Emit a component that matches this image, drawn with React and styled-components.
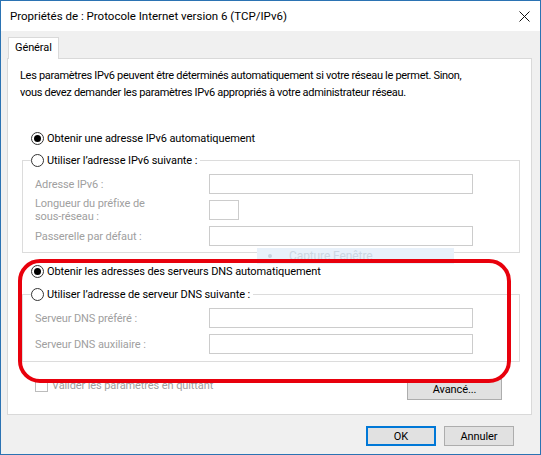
import styled, { createGlobalStyle } from "styled-components";

const GlobalStyle = createGlobalStyle`
  html, body {
    margin: 0;
    padding: 0;
    background: #ffffff;
  }
  body {
    font-family: "Segoe UI", Roboto, "Noto Sans", sans-serif;
    font-size: 11px;
    letter-spacing: -0.1px;
    color: #000;
  }
  * {
    box-sizing: border-box;
  }
`;

const Window = styled.div`
  position: relative;
  width: 541px;
  height: 455px;
  border: 1px solid #2b73b3;
  background: #f0f0f0;
  display: flex;
  flex-direction: column;
  overflow: hidden;
`;

const TitleBar = styled.div`
  height: 30px;
  flex: none;
  background: #ffffff;
  display: flex;
  align-items: center;
  justify-content: space-between;
  padding: 0 10px 0 9px;
`;

const Title = styled.span`
  font-size: 11.5px;
  letter-spacing: 0;
  line-height: 16px;
`;

const Body = styled.div`
  flex: 1;
  display: flex;
  flex-direction: column;
  padding: 6px 8px 0 6px;
`;

const TabStrip = styled.div`
  display: flex;
  padding-left: 1px;
  margin-bottom: -1px;
  position: relative;
  z-index: 1;
`;

const Tab = styled.div`
  height: 22px;
  padding: 0 6px;
  border: 1px solid #d9d9d9;
  border-bottom: none;
  background: #ffffff;
  line-height: 20px;
`;

const Panel = styled.div`
  height: 357px;
  background: #ffffff;
  border: 1px solid #d9d9d9;
  padding: 8px 0 0 12px;
  display: flex;
  flex-direction: column;
`;

const Description = styled.p`
  margin: 0;
  line-height: 17px;
  letter-spacing: -0.3px;
  white-space: nowrap;
`;

const Radio = styled.label`
  display: flex;
  align-items: center;
  gap: 3px;
  height: 18px;
  white-space: nowrap;
  margin-left: ${(p) => p.$indent ?? 11}px;
  margin-top: ${(p) => p.$top ?? 0}px;
`;

const Circle = styled.span`
  flex: none;
  width: 13px;
  height: 13px;
  border-radius: 50%;
  border: 1px solid #333333;
  background: #ffffff;
  display: flex;
  align-items: center;
  justify-content: center;
  &::after {
    content: "";
    width: 7px;
    height: 7px;
    border-radius: 50%;
    background: ${(p) => (p.$checked ? "#000" : "transparent")};
  }
`;

const Group = styled.fieldset`
  margin: ${(p) => p.$top}px 11px 0 2px;
  border: 1px solid #dcdcdc;
  padding: 5px 0 ${(p) => p.$bottom}px 8px;
  min-width: 0;
`;

const Legend = styled.legend`
  padding: 0 3px 0 0;
  margin: 0;
  & > label {
    margin: 0;
  }
`;

const FieldGrid = styled.div`
  margin-left: 4px;
  display: grid;
  grid-template-columns: 174px auto;
  grid-auto-rows: 20px;
  row-gap: 6px;
`;

const FieldLabel = styled.span`
  align-self: center;
  color: #a0a0a0;
  line-height: 13px;
  white-space: nowrap;
`;

const Input = styled.div`
  width: ${(p) => p.$width}px;
  height: 20px;
  border: 1px solid #cccccc;
  background: #ffffff;
`;

const BottomRow = styled.div`
  margin: 17px 29px 0 15px;
  display: flex;
  justify-content: space-between;
  align-items: flex-start;
`;

const CheckLabel = styled.label`
  display: flex;
  align-items: center;
  gap: 4px;
  color: #a0a0a0;
  height: 13px;
`;

const CheckBox = styled.span`
  width: 13px;
  height: 13px;
  border: 1px solid #bcbcbc;
  background: #ffffff;
`;

const Button = styled.button`
  width: ${(p) => p.$width}px;
  height: ${(p) => p.$height}px;
  font: inherit;
  font-size: 11px;
  letter-spacing: inherit;
  color: #000;
  background: #e1e1e1;
  border: 1px solid ${(p) => (p.$default ? "#0078d7" : "#adadad")};
  box-shadow: ${(p) => (p.$default ? "inset 0 0 0 1px #0078d7" : "none")};
  padding: 0;
  border-radius: 0;
`;

const Footer = styled.div`
  display: flex;
  justify-content: flex-end;
  gap: 8px;
  padding: 11px 18px 0 0;
`;

const CaptureHint = styled.div`
  position: absolute;
  left: 256px;
  top: 247px;
  width: 197px;
  height: 16px;
  background: #e8f1fa;
  color: #cbd6e2;
  display: flex;
  align-items: center;
  gap: 17px;
  padding-left: 11px;
  font-size: 12px;
  &::before {
    content: "";
    width: 4px;
    height: 4px;
    border-radius: 50%;
    background: #c6d1dd;
  }
`;

const Highlight = styled.div`
  position: absolute;
  left: 17px;
  top: 258px;
  width: 493px;
  height: 124px;
  border: 4px solid #e8000c;
  border-radius: 22px;
  pointer-events: none;
`;

function CloseIcon() {
  return (
    <svg width="11" height="11" viewBox="0 0 11 11">
      <path d="M0.5 0.5 L10.5 10.5 M10.5 0.5 L0.5 10.5" stroke="#111" strokeWidth="1" />
    </svg>
  );
}

function RadioOption({ checked, children, top, indent }) {
  return (
    <Radio $top={top} $indent={indent}>
      <Circle $checked={checked} />
      {children}
    </Radio>
  );
}

export default function App() {
  return (
    <>
      <GlobalStyle />
      <Window>
        <TitleBar>
          <Title>Propriétés de : Protocole Internet version 6 (TCP/IPv6)</Title>
          <CloseIcon />
        </TitleBar>
        <Body>
          <TabStrip>
            <Tab>Général</Tab>
          </TabStrip>
          <Panel>
            <Description>
              Les paramètres IPv6 peuvent être déterminés automatiquement si votre réseau le permet. Sinon,
              <br />
              vous devez demander les paramètres IPv6 appropriés à votre administrateur réseau.
            </Description>

            <RadioOption checked top={28}>
              Obtenir une adresse IPv6 automatiquement
            </RadioOption>
            <Group $top={4} $bottom={6}>
              <Legend>
                <RadioOption indent={0}>Utiliser l’adresse IPv6 suivante :</RadioOption>
              </Legend>
              <FieldGrid>
                <FieldLabel>Adresse IPv6 :</FieldLabel>
                <Input $width={264} />
                <FieldLabel>
                  Longueur du préfixe de
                  <br />
                  sous-réseau :
                </FieldLabel>
                <Input $width={30} />
                <FieldLabel>Passerelle par défaut :</FieldLabel>
                <Input $width={264} />
              </FieldGrid>
            </Group>

            <RadioOption checked top={9}>
              Obtenir les adresses des serveurs DNS automatiquement
            </RadioOption>
            <Group $top={5} $bottom={7}>
              <Legend>
                <RadioOption indent={0}>Utiliser l’adresse de serveur DNS suivante :</RadioOption>
              </Legend>
              <FieldGrid>
                <FieldLabel>Serveur DNS préféré :</FieldLabel>
                <Input $width={264} />
                <FieldLabel>Serveur DNS auxiliaire :</FieldLabel>
                <Input $width={264} />
              </FieldGrid>
            </Group>

            <BottomRow>
              <CheckLabel>
                <CheckBox />
                Valider les paramètres en quittant
              </CheckLabel>
              <Button $width={95} $height={21}>
                Avancé...
              </Button>
            </BottomRow>
          </Panel>
          <Footer>
            <Button $default $width={70} $height={20}>
              OK
            </Button>
            <Button $width={70} $height={20}>
              Annuler
            </Button>
          </Footer>
        </Body>
        <CaptureHint>Capture Fenêtre</CaptureHint>
        <Highlight />
      </Window>
    </>
  );
}
